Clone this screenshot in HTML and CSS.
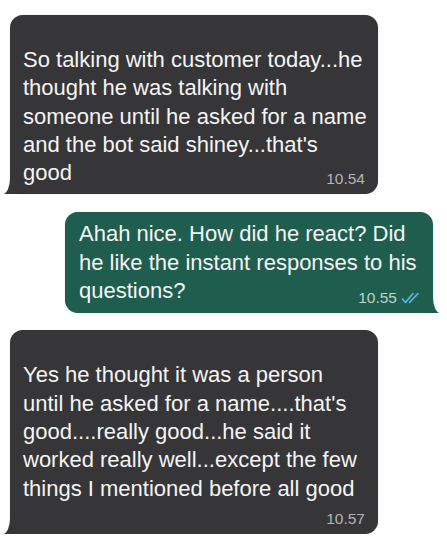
FILE: index.html
```html
<!DOCTYPE html>
<html lang="en">
<head>
    <meta charset="UTF-8">
    <title>Chat</title>
    <link rel="stylesheet" href="styles.css">
</head>
<body>
    <div class="chat">
        <div class="bubble received">
            <p class="text">So talking with customer today...he<br>thought he was talking with<br>someone until he asked for a name<br>and the bot said shiney...that's<br>good</p>
            <span class="meta">10.54</span>
        </div>

        <div class="bubble sent">
            <p class="text">Ahah nice. How did he react? Did<br>he like the instant responses to his<br>questions?</p>
            <span class="meta">10.55
                <svg class="ticks" width="19" height="12" viewBox="0 0 19 12">
                    <path d="M1.5 7 L4.5 10.5 L12 1.5" fill="none" stroke="#5cb9e8" stroke-width="1.6" stroke-linecap="round" stroke-linejoin="round"/>
                    <path d="M8.5 10.5 L17 1.5" fill="none" stroke="#5cb9e8" stroke-width="1.6" stroke-linecap="round"/>
                </svg>
            </span>
        </div>

        <div class="bubble received tall">
            <p class="text">Yes he thought it was a person<br>until he asked for a name....that's<br>good....really good...he said it<br>worked really well...except the few<br>things I mentioned before all good</p>
            <span class="meta">10.57</span>
        </div>
    </div>
</body>
</html>
```

FILE: styles.css
```css
:root {
    --bubble-grey: #363638;
    --bubble-green: #1f5e4e;
    --meta-grey: #b4b4b6;
    --meta-green: #bcd2ca;
}

* {
    margin: 0;
    padding: 0;
    box-sizing: border-box;
}

body {
    background-color: #ffffff;
    font-family: 'Liberation Sans', Arial, sans-serif;
}

.chat {
    display: flex;
    flex-direction: column;
    gap: 17px;
    padding: 15px 14px 0 10px;
}

.bubble {
    position: relative;
    width: 368px;
    border-radius: 13px;
    color: #f4f4f4;
    box-shadow: 0 0 1px rgba(0,0,0,0.35);
}

.text {
    font-size: 22px;
    line-height: 28.3px;
    white-space: nowrap;
    position: relative;
    z-index: 1;
}

.bubble.received {
    align-self: flex-start;
    background-color: var(--bubble-grey);
    padding: 31px 10px 7px 13px;
}

.bubble.received.tall {
    padding-bottom: 31px;
}

.bubble.sent {
    align-self: flex-end;
    background-color: var(--bubble-green);
    padding: 8px 10px 8px 14px;
    margin-top: 1px;
}

/* tails */
.bubble::before,
.bubble::after {
    content: "";
    position: absolute;
    bottom: 0;
    height: 16px;
}

.bubble.received::before {
    left: -7px;
    width: 20px;
    background-color: var(--bubble-grey);
}

.bubble.received::after {
    left: -20px;
    width: 20px;
    background-color: #ffffff;
    border-bottom-right-radius: 7px 16px;
}

.bubble.sent::before {
    right: -7px;
    width: 20px;
    background-color: var(--bubble-green);
}

.bubble.sent::after {
    right: -20px;
    width: 20px;
    background-color: #ffffff;
    border-bottom-left-radius: 7px 16px;
}

.meta {
    position: absolute;
    right: 13px;
    bottom: 6px;
    font-size: 15.5px;
    line-height: 18px;
    color: var(--meta-grey);
    display: flex;
    align-items: center;
    gap: 4px;
    z-index: 1;
}

.bubble.sent .meta {
    color: var(--meta-green);
}

.ticks {
    display: block;
}
```
